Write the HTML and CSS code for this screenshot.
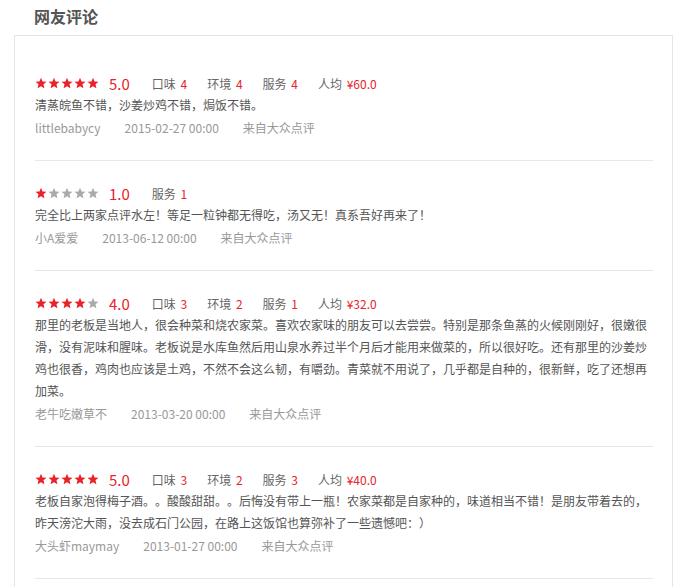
FILE: index.html
```html
<!DOCTYPE html>
<html lang="zh-CN">
<head>
  <meta charset="UTF-8" />
  <meta name="viewport" content="width=device-width, initial-scale=1.0"/>
  <title>网友评论</title>
  <link rel="stylesheet" href="styles.css">
</head>
<body>
  <h2 class="section-title">网友评论</h2>

  <div class="comment-box">
    <!-- 1 -->
    <div class="comment">
      <div class="rating-row">
        <span class="stars">
          <svg class="star on" viewBox="0 0 24 24"><path d="M12 1.5l3.1 7.3 7.9.7-6 5.2 1.8 7.8L12 18.4l-6.8 4.1 1.8-7.8-6-5.2 7.9-.7z"/></svg>
          <svg class="star on" viewBox="0 0 24 24"><path d="M12 1.5l3.1 7.3 7.9.7-6 5.2 1.8 7.8L12 18.4l-6.8 4.1 1.8-7.8-6-5.2 7.9-.7z"/></svg>
          <svg class="star on" viewBox="0 0 24 24"><path d="M12 1.5l3.1 7.3 7.9.7-6 5.2 1.8 7.8L12 18.4l-6.8 4.1 1.8-7.8-6-5.2 7.9-.7z"/></svg>
          <svg class="star on" viewBox="0 0 24 24"><path d="M12 1.5l3.1 7.3 7.9.7-6 5.2 1.8 7.8L12 18.4l-6.8 4.1 1.8-7.8-6-5.2 7.9-.7z"/></svg>
          <svg class="star on" viewBox="0 0 24 24"><path d="M12 1.5l3.1 7.3 7.9.7-6 5.2 1.8 7.8L12 18.4l-6.8 4.1 1.8-7.8-6-5.2 7.9-.7z"/></svg>
        </span>
        <span class="score">5.0</span>
        <span class="item">口味 <em>4</em></span>
        <span class="item">环境 <em>4</em></span>
        <span class="item">服务 <em>4</em></span>
        <span class="item">人均 <em>¥60.0</em></span>
      </div>
      <p class="content">清蒸皖鱼不错，沙姜炒鸡不错，焗饭不错。</p>
      <div class="meta">
        <span>littlebabycy</span>
        <span>2015-02-27 00:00</span>
        <span>来自大众点评</span>
      </div>
    </div>

    <!-- 2 -->
    <div class="comment">
      <div class="rating-row">
        <span class="stars">
          <svg class="star on" viewBox="0 0 24 24"><path d="M12 1.5l3.1 7.3 7.9.7-6 5.2 1.8 7.8L12 18.4l-6.8 4.1 1.8-7.8-6-5.2 7.9-.7z"/></svg>
          <svg class="star" viewBox="0 0 24 24"><path d="M12 1.5l3.1 7.3 7.9.7-6 5.2 1.8 7.8L12 18.4l-6.8 4.1 1.8-7.8-6-5.2 7.9-.7z"/></svg>
          <svg class="star" viewBox="0 0 24 24"><path d="M12 1.5l3.1 7.3 7.9.7-6 5.2 1.8 7.8L12 18.4l-6.8 4.1 1.8-7.8-6-5.2 7.9-.7z"/></svg>
          <svg class="star" viewBox="0 0 24 24"><path d="M12 1.5l3.1 7.3 7.9.7-6 5.2 1.8 7.8L12 18.4l-6.8 4.1 1.8-7.8-6-5.2 7.9-.7z"/></svg>
          <svg class="star" viewBox="0 0 24 24"><path d="M12 1.5l3.1 7.3 7.9.7-6 5.2 1.8 7.8L12 18.4l-6.8 4.1 1.8-7.8-6-5.2 7.9-.7z"/></svg>
        </span>
        <span class="score">1.0</span>
        <span class="item">服务 <em>1</em></span>
      </div>
      <p class="content">完全比上两家点评水左！等足一粒钟都无得吃，汤又无！真系吾好再来了！</p>
      <div class="meta">
        <span>小A爱爱</span>
        <span>2013-06-12 00:00</span>
        <span>来自大众点评</span>
      </div>
    </div>

    <!-- 3 -->
    <div class="comment">
      <div class="rating-row">
        <span class="stars">
          <svg class="star on" viewBox="0 0 24 24"><path d="M12 1.5l3.1 7.3 7.9.7-6 5.2 1.8 7.8L12 18.4l-6.8 4.1 1.8-7.8-6-5.2 7.9-.7z"/></svg>
          <svg class="star on" viewBox="0 0 24 24"><path d="M12 1.5l3.1 7.3 7.9.7-6 5.2 1.8 7.8L12 18.4l-6.8 4.1 1.8-7.8-6-5.2 7.9-.7z"/></svg>
          <svg class="star on" viewBox="0 0 24 24"><path d="M12 1.5l3.1 7.3 7.9.7-6 5.2 1.8 7.8L12 18.4l-6.8 4.1 1.8-7.8-6-5.2 7.9-.7z"/></svg>
          <svg class="star on" viewBox="0 0 24 24"><path d="M12 1.5l3.1 7.3 7.9.7-6 5.2 1.8 7.8L12 18.4l-6.8 4.1 1.8-7.8-6-5.2 7.9-.7z"/></svg>
          <svg class="star" viewBox="0 0 24 24"><path d="M12 1.5l3.1 7.3 7.9.7-6 5.2 1.8 7.8L12 18.4l-6.8 4.1 1.8-7.8-6-5.2 7.9-.7z"/></svg>
        </span>
        <span class="score">4.0</span>
        <span class="item">口味 <em>3</em></span>
        <span class="item">环境 <em>2</em></span>
        <span class="item">服务 <em>1</em></span>
        <span class="item">人均 <em>¥32.0</em></span>
      </div>
      <p class="content">那里的老板是当地人，很会种菜和烧农家菜。喜欢农家味的朋友可以去尝尝。特别是那条鱼蒸的火候刚刚好，很嫩很滑，没有泥味和腥味。老板说是水库鱼然后用山泉水养过半个月后才能用来做菜的，所以很好吃。还有那里的沙姜炒鸡也很香，鸡肉也应该是土鸡，不然不会这么韧，有嚼劲。青菜就不用说了，几乎都是自种的，很新鲜，吃了还想再加菜。</p>
      <div class="meta">
        <span>老牛吃嫩草不</span>
        <span>2013-03-20 00:00</span>
        <span>来自大众点评</span>
      </div>
    </div>

    <!-- 4 -->
    <div class="comment">
      <div class="rating-row">
        <span class="stars">
          <svg class="star on" viewBox="0 0 24 24"><path d="M12 1.5l3.1 7.3 7.9.7-6 5.2 1.8 7.8L12 18.4l-6.8 4.1 1.8-7.8-6-5.2 7.9-.7z"/></svg>
          <svg class="star on" viewBox="0 0 24 24"><path d="M12 1.5l3.1 7.3 7.9.7-6 5.2 1.8 7.8L12 18.4l-6.8 4.1 1.8-7.8-6-5.2 7.9-.7z"/></svg>
          <svg class="star on" viewBox="0 0 24 24"><path d="M12 1.5l3.1 7.3 7.9.7-6 5.2 1.8 7.8L12 18.4l-6.8 4.1 1.8-7.8-6-5.2 7.9-.7z"/></svg>
          <svg class="star on" viewBox="0 0 24 24"><path d="M12 1.5l3.1 7.3 7.9.7-6 5.2 1.8 7.8L12 18.4l-6.8 4.1 1.8-7.8-6-5.2 7.9-.7z"/></svg>
          <svg class="star on" viewBox="0 0 24 24"><path d="M12 1.5l3.1 7.3 7.9.7-6 5.2 1.8 7.8L12 18.4l-6.8 4.1 1.8-7.8-6-5.2 7.9-.7z"/></svg>
        </span>
        <span class="score">5.0</span>
        <span class="item">口味 <em>3</em></span>
        <span class="item">环境 <em>2</em></span>
        <span class="item">服务 <em>3</em></span>
        <span class="item">人均 <em>¥40.0</em></span>
      </div>
      <p class="content">老板自家泡得梅子酒。。酸酸甜甜。。后悔没有带上一瓶！农家菜都是自家种的，味道相当不错！是朋友带着去的，昨天滂沱大雨，没去成石门公园，在路上这饭馆也算弥补了一些遗憾吧：）</p>
      <div class="meta">
        <span>大头虾maymay</span>
        <span>2013-01-27 00:00</span>
        <span>来自大众点评</span>
      </div>
    </div>
  </div>
</body>
</html>
```

FILE: styles.css
```css
body {
  font-family: "Noto Sans CJK SC", "Noto Sans", sans-serif;
  background-color: #fff;
  margin: 0;
  padding: 0 15px 0 14px;
  color: #666;
  text-spacing-trim: space-all;
}

.section-title {
  margin: 0 0 3px;
  padding-left: 20px;
  font-size: 16px;
  line-height: 32px;
  font-weight: bold;
  color: #555;
}

.comment-box {
  border: 1px solid #e5e5e5;
  padding: 15px 19px 40px 20px;
}

.comment {
  padding: 21px 0 21px;
  border-bottom: 1px solid #e8e8e8;
}

.rating-row {
  display: flex;
  align-items: center;
  height: 22px;
  font-size: 12px;
  color: #666;
}

.stars {
  display: flex;
  gap: 1px;
  margin-right: 10px;
}

.star {
  width: 12px;
  height: 12px;
  fill: #aaa;
}

.star.on {
  fill: #e8232b;
}

.score {
  font-size: 15px;
  color: #e8232b;
  margin-right: 22px;
}

.item {
  margin-right: 20px;
}

.item em {
  font-style: normal;
  color: #e8232b;
  margin-left: 2px;
}

.content {
  margin: 0;
  font-size: 12px;
  line-height: 22px;
  color: #555;
}

.meta {
  display: flex;
  margin-top: 1px;
  font-size: 12px;
  line-height: 22px;
  color: #999;
}

.meta span {
  margin-right: 24px;
}
```
